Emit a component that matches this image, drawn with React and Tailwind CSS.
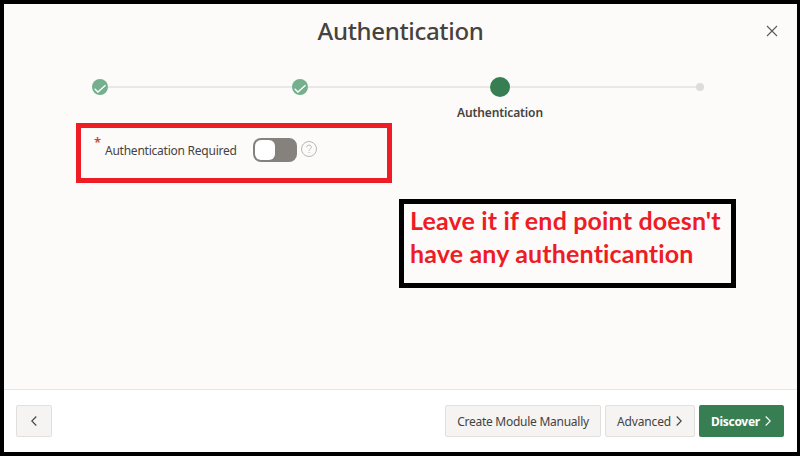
function CheckDot() {
  return (
    <svg className="block size-4 shrink-0" viewBox="0 0 16 16">
      <circle cx="8" cy="8" r="8" fill="#75b08e" />
      <path d="M2.7 9.8 L5.9 13 L13.5 6.2" fill="none" stroke="#fff" strokeWidth="1.3" />
    </svg>
  );
}

function Chevron({ left }) {
  return (
    <svg className="block h-[10px] w-[6px] shrink-0" viewBox="0 0 6 10" fill="none" stroke="currentColor" strokeWidth="1.1">
      <path d={left ? "M5.3 0.5 L0.8 5 L5.3 9.5" : "M0.7 0.5 L5.2 5 L0.7 9.5"} />
    </svg>
  );
}

export default function App() {
  return (
    <div className="flex h-[456px] w-[800px] flex-col border-4 border-r-[3px] border-black bg-[#fcfbf9] font-['Noto_Sans',sans-serif] text-[#45423f]">
      <main className="h-[385px]">
        <header className="grid h-[56px] grid-cols-[60px_1fr_60px] items-center">
          <span />
          <h1 className="mt-[-2px] text-center text-[24px] leading-[30px] font-medium tracking-[-0.32px] whitespace-nowrap">Authentication</h1>
          <svg className="mt-[-2px] mr-[19px] size-[12px] justify-self-end" viewBox="0 0 12 12" stroke="#5c5956" strokeWidth="1.1">
            <path d="M1 1 L11 11 M11 1 L1 11" />
          </svg>
        </header>

        <div className="mt-[17px] ml-[88px] flex h-[20px] w-[612px] items-center">
          <CheckDot />
          <div className="h-[2px] w-[184px] bg-[#e9e8e5]" />
          <CheckDot />
          <div className="h-[2px] w-[182px] bg-[#e9e8e5]" />
          <div className="size-5 shrink-0 rounded-full bg-[#377f53]" />
          <div className="h-[2px] w-[186px] bg-[#e9e8e5]" />
          <div className="size-2 shrink-0 rounded-full bg-[#dedbd8]" />
        </div>
        <div className="mt-[7px] ml-[396px] h-[18px] w-[200px] text-center text-[12px] leading-[18px] font-semibold tracking-[-0.12px]">Authentication</div>

        <section className="mt-[1px] ml-[72px] flex h-[60px] w-[316px] items-center border-5 border-[#ee1c25] pl-[13px]">
          <span className="mb-[22px] w-[11px] text-[13px] leading-4 font-semibold text-[#c74634]">*</span>
          <label className="mt-[-5px] w-[148px] text-[12px] leading-4 tracking-[-0.24px] whitespace-nowrap">Authentication Required</label>
          <div className="mt-[-6px] flex h-6 w-11 items-center rounded-[8px] bg-[#85817d] pl-[2px]">
            <div className="size-5 rounded-[6px] bg-white" />
          </div>
          <svg className="mt-[-8px] ml-1 size-4" viewBox="0 0 16 16" fill="none" stroke="#b9b7b4">
            <circle cx="8" cy="8" r="7.5" />
            <path d="M5.7 6.3 C5.7 3.4 10.4 3.4 10.4 6.2 C10.4 8 8 7.8 8 9.8 M8 11 V12.1" />
          </svg>
        </section>

        <aside className="mt-4 ml-[395px] h-[89px] w-[337px] border-5 border-black pl-[6px] font-['Lato',sans-serif] text-[25px] leading-[33px] font-bold tracking-[0.16px] whitespace-nowrap text-[#ee1c25]">
          <p>Leave it if end point doesn't</p>
          <p>have any authenticantion</p>
        </aside>
      </main>

      <footer className="flex h-[63px] items-start gap-1 border-t border-[#e8e6e3] bg-white pt-[15px] pr-[13px] pl-3 text-[12px]">
        <button className="mr-auto flex h-8 w-9 items-center justify-center rounded-[2px] border border-[#e2e0de] bg-[#f5f4f2] pr-px">
          <Chevron left />
        </button>
        <button className="flex h-8 w-[156px] items-center justify-center rounded-[2px] border border-[#e2e0de] bg-[#f5f4f2] pt-[2px] tracking-[-0.26px] whitespace-nowrap">Create Module Manually</button>
        <button className="flex h-8 w-[90px] items-center gap-[5px] rounded-[2px] border border-[#e2e0de] bg-[#f5f4f2] pl-[11px]">
          <span className="pt-[2px] tracking-[-0.15px]">Advanced</span>
          <Chevron />
        </button>
        <button className="flex h-8 w-[85px] items-center gap-[5px] rounded-[2px] bg-[#377f53] pl-3 font-bold text-white">
          <span className="pt-[2px] tracking-[-0.3px]">Discover</span>
          <Chevron />
        </button>
      </footer>
    </div>
  );
}
